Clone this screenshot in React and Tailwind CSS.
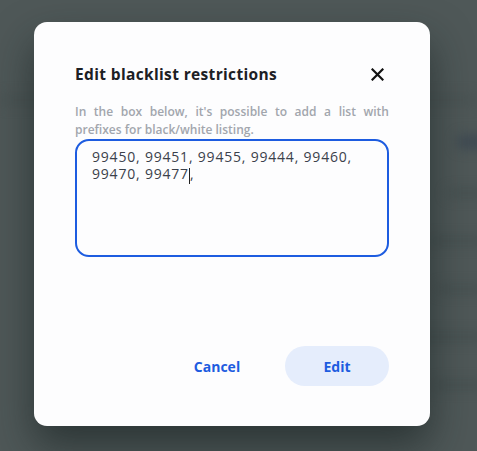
import React from "react";

const rows = ["w-[40px]", "w-[60px]", "w-[50px]", "w-[70px]", "w-[55px]"];

const App = () => {
    return (
        <div className="relative h-[451px] w-[477px] overflow-hidden bg-[#4f5858]" style={{ fontFamily: "'Open Sans', 'Noto Sans', sans-serif" }}>
            {/* blurred page behind the overlay */}
            <div className="absolute inset-0 blur-[6px]">
                <div className="mt-[95px] h-[10px] w-full bg-[#4a5353]" />
                <div className="ml-auto mt-[30px] mr-[-10px] flex flex-col items-end gap-[40px]">
                    <div className="h-[14px] w-[30px] rounded bg-[#3f4a52]" />
                    {rows.map((w, i) => (
                        <div key={i} className={`h-[8px] ${w} rounded bg-[#465050]`} />
                    ))}
                </div>
            </div>

            <div className="relative flex pl-[34px] pt-[22px]">
                <div className="flex h-[404px] w-[396px] flex-col rounded-[13px] bg-[#fdfdfe] px-[41px] pt-[41px] pb-[40px] shadow-[0_20px_40px_rgba(20,30,30,0.6)]">
                    <div className="flex items-center justify-between">
                        <h2 className="text-[15.5px] font-bold tracking-[0.35px] text-[#1c2024]">Edit blacklist restrictions</h2>
                        <button className="mr-[5px] text-[#111]">
                            <svg width="13" height="13" viewBox="0 0 13 13" fill="none" stroke="currentColor" strokeWidth="2.2" strokeLinecap="square">
                                <path d="M1.5 1.5l10 10M11.5 1.5l-10 10" />
                            </svg>
                        </button>
                    </div>

                    <p className="mt-[17px] text-justify text-[12px] font-semibold leading-[18px] text-[#a2a6ad]">
                        In the box below, it's possible to add a list with prefixes for black/white listing.
                    </p>

                    <div className="h-[118px] rounded-[14px] border-2 border-[#1d5ce0] px-[15px] pt-[7px] text-[14px] font-medium leading-[17px] tracking-[0.8px] text-[#3b414b]">
                        <div>99450, 99451, 99455, 99444, 99460,</div>
                        <div className="flex items-center">
                            <span>99470, 99477</span>
                            <i className="h-[16px] w-px translate-y-[2px] bg-[#222]" />
                            <span>,</span>
                        </div>
                    </div>

                    <div className="mt-auto flex justify-end gap-[16px]">
                        <button className="h-[40px] w-[104px] rounded-full text-[14px] font-bold text-[#1d5ce0]">Cancel</button>
                        <button className="h-[40px] w-[104px] rounded-full bg-[#e5edfc] text-[14px] font-bold text-[#1d5ce0]">Edit</button>
                    </div>
                </div>
            </div>
        </div>
    );
};

export default App;
